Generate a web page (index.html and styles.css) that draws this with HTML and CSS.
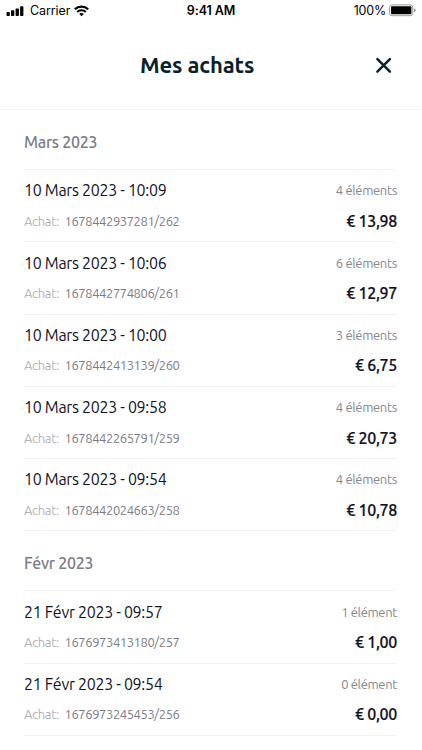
FILE: index.html
```html
<!DOCTYPE html>
<html lang="fr">
<head>
<meta charset="utf-8">
<title>Mes achats</title>
<link rel="stylesheet" href="styles.css">
</head>
<body>
<div class="status">
  <div class="carrier">
    <svg width="18" height="12" viewBox="0 0 18 12"><rect x=".5" y="7" width="3.3" height="4" rx=".8"/><rect x="5" y="5.3" width="3.3" height="5.7" rx=".8"/><rect x="9.6" y="3.4" width="3.3" height="7.6" rx=".8"/><rect x="14.1" y="1.2" width="3.3" height="9.8" rx=".8"/></svg>
    <span class="carrier-name">Carrier</span>
    <svg width="15" height="12" viewBox="0 0 15 12"><g fill="none" stroke="#000" stroke-width="2.1"><path d="M.8 4.3a9.6 9.6 0 0 1 13.4 0"/><path d="M3.2 7a6 6 0 0 1 8.6 0"/></g><path d="M5.2 9a3.3 3.3 0 0 1 4.6 0L7.5 11.3z"/></svg>
  </div>
  <div class="clock">9:41 AM</div>
  <div class="power">
    <span class="percent">100%</span>
    <svg width="27" height="13" viewBox="0 0 27 13"><rect x=".6" y=".9" width="23.2" height="10.8" rx="2.6" fill="#fff" stroke="#999"/><rect x="2" y="2.3" width="20.4" height="8" rx="1"/><path d="M25 4.3q1.7.5 1.7 2T25 8.3z" fill="#999"/></svg>
  </div>
</div>
<header class="header">
  <h1 class="title">Mes achats</h1>
  <svg class="close" width="17" height="17" viewBox="0 0 17 17"><path d="M2.4 2.2l12.5 12.4M14.9 2.2L2.4 14.6" fill="none" stroke="#06222c" stroke-width="2.5" stroke-linecap="round"/></svg>
</header>
<main class="list">
  <h2 class="month">Mars 2023</h2>
  <article class="row"><div class="line top"><span class="date">10 Mars 2023 - 10:09</span><span class="count">4 éléments</span></div><div class="line"><span class="label">Achat:</span><span class="ref">1678442937281/262</span><span class="price">€ 13,98</span></div></article>
  <article class="row"><div class="line top"><span class="date">10 Mars 2023 - 10:06</span><span class="count">6 éléments</span></div><div class="line"><span class="label">Achat:</span><span class="ref">1678442774806/261</span><span class="price">€ 12,97</span></div></article>
  <article class="row"><div class="line top"><span class="date">10 Mars 2023 - 10:00</span><span class="count">3 éléments</span></div><div class="line"><span class="label">Achat:</span><span class="ref">1678442413139/260</span><span class="price">€ 6,75</span></div></article>
  <article class="row"><div class="line top"><span class="date">10 Mars 2023 - 09:58</span><span class="count">4 éléments</span></div><div class="line"><span class="label">Achat:</span><span class="ref">1678442265791/259</span><span class="price">€ 20,73</span></div></article>
  <article class="row"><div class="line top"><span class="date">10 Mars 2023 - 09:54</span><span class="count">4 éléments</span></div><div class="line"><span class="label">Achat:</span><span class="ref">1678442024663/258</span><span class="price">€ 10,78</span></div></article>
  <h2 class="month">Févr 2023</h2>
  <article class="row"><div class="line top"><span class="date">21 Févr 2023 - 09:57</span><span class="count">1 élément</span></div><div class="line"><span class="label">Achat:</span><span class="ref">1676973413180/257</span><span class="price">€ 1,00</span></div></article>
  <article class="row"><div class="line top"><span class="date">21 Févr 2023 - 09:54</span><span class="count">0 élément</span></div><div class="line"><span class="label">Achat:</span><span class="ref">1676973245453/256</span><span class="price">€ 0,00</span></div></article>
</main>
</body>
</html>
```
FILE: styles.css
```css
* { box-sizing: border-box; }
body {
  margin: 0;
  height: 750px;
  overflow: hidden;
  background: #fff;
  color: #12121f;
  font-family: Ubuntu, "Noto Sans", sans-serif;
}
svg { display: block; flex: none; }
.status {
  display: grid;
  grid-template-columns: 1fr auto 1fr;
  align-items: center;
  height: 21px;
  padding: 0 6px 0 6px;
  color: #000;
  font: 12.5px/21px Inter, sans-serif;
}
.carrier, .power { display: flex; align-items: center; }
.carrier-name { margin: 0 4px 0 6px; letter-spacing: -.1px; }
.clock { font-weight: 600; font-size: 12.5px; letter-spacing: -.1px; }
.power { justify-content: flex-end; gap: 3px; }
.percent { letter-spacing: -.2px; }
.header {
  display: flex;
  align-items: center;
  justify-content: space-between;
  height: 89px;
  padding: 0 30px 0 140px;
  border-bottom: 1px solid #f4f4f4;
}
.title {
  margin: 0;
  color: #06222c;
  font-size: 22px;
  line-height: 30px;
  font-weight: 700;
  letter-spacing: -.1px;
}
.list { padding: 0 25px 0 24px; }
.month {
  display: flex;
  align-items: center;
  height: 60px;
  margin: 0;
  padding-top: 5px;
  border-bottom: 1px solid #f3f3f4;
  color: #7c7c86;
  font-size: 16px;
  font-weight: 500;
  letter-spacing: -.3px;
}
.row {
  height: 72.25px;
  padding-top: 5px;
  border-bottom: 1px solid #f3f3f4;
}
.line {
  display: flex;
  align-items: center;
  height: 30.5px;
  white-space: nowrap;
}
.date { font-size: 16px; letter-spacing: -.31px; }
.count, .price { margin-left: auto; }
.count { color: #868690; font-size: 13px; letter-spacing: -.35px; }
.label { width: 40.5px; color: #b3b3ba; font-size: 13px; letter-spacing: -.35px; }
.ref { color: #7c7c86; font-size: 13px; letter-spacing: -.42px; }
.price { font-size: 16px; font-weight: 500; letter-spacing: -.3px; -webkit-text-stroke: .2px; }
```
